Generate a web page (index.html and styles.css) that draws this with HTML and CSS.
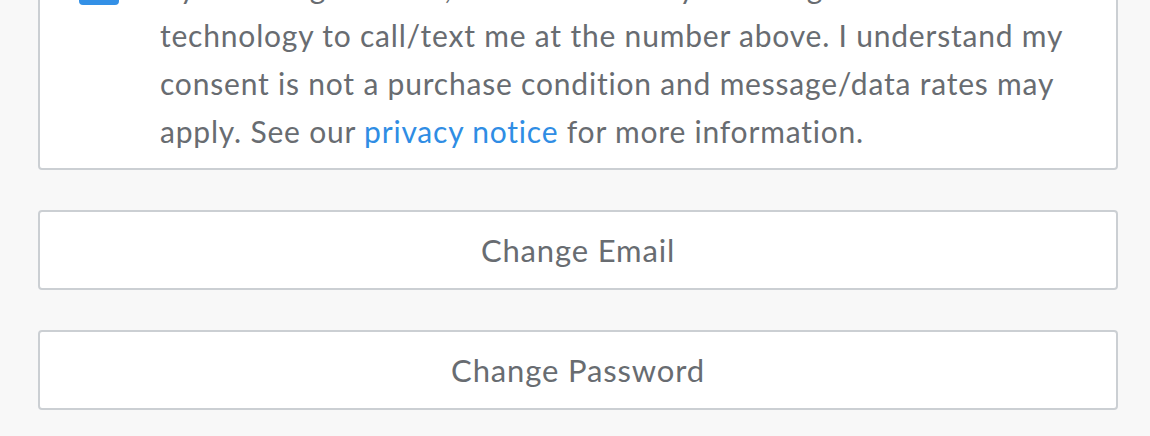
FILE: index.html
```html
<!DOCTYPE html>
<html>
<head>
<meta charset="utf-8">
<link rel="stylesheet" href="styles.css">
</head>
<body>
<main class="page">
  <section class="consent">
    <span class="checkbox"></span>
    <p class="consent-text">By checking this box, I consent to Wayfair using automated<br>technology to call/text me at the number above. I understand my<br>consent is not a purchase condition and message/data rates may<br>apply. See our <a class="link" href="#">privacy notice</a> for more information.</p>
  </section>
  <button class="action">Change Email</button>
  <button class="action">Change Password</button>
</main>
</body>
</html>
```

FILE: styles.css
```css
html, body {
  margin: 0;
  padding: 0;
  background: #f8f8f8;
  height: 100%;
  overflow: hidden;
}
body {
  font-family: Lato, "Open Sans", sans-serif;
  color: #686c71;
}
.page {
  display: flex;
  flex-direction: column;
  gap: 40px;
  width: 1080px;
  margin-left: 38px;
}
.consent {
  display: flex;
  align-items: flex-start;
  gap: 41px;
  margin-top: -59px;
  padding: 20px 0 13px 39px;
  background: #fff;
  border: 2px solid #cbcfd3;
  border-radius: 4px;
}
.checkbox {
  flex: none;
  width: 40px;
  height: 40px;
  margin-top: 2px;
  background: #3390e6;
  border-radius: 4px;
}
.consent-text {
  margin: 0;
  font-size: 30px;
  line-height: 48px;
  letter-spacing: 0.8px;
  white-space: nowrap;
}
.link {
  color: #2f8de4;
  text-decoration: none;
}
.action {
  height: 80px;
  background: #fff;
  border: 2px solid #cbcfd3;
  border-radius: 4px;
  font-family: Lato, "Open Sans", sans-serif;
  font-size: 31px;
  letter-spacing: 0.85px;
  color: #686c71;
  padding: 0;
}
```
